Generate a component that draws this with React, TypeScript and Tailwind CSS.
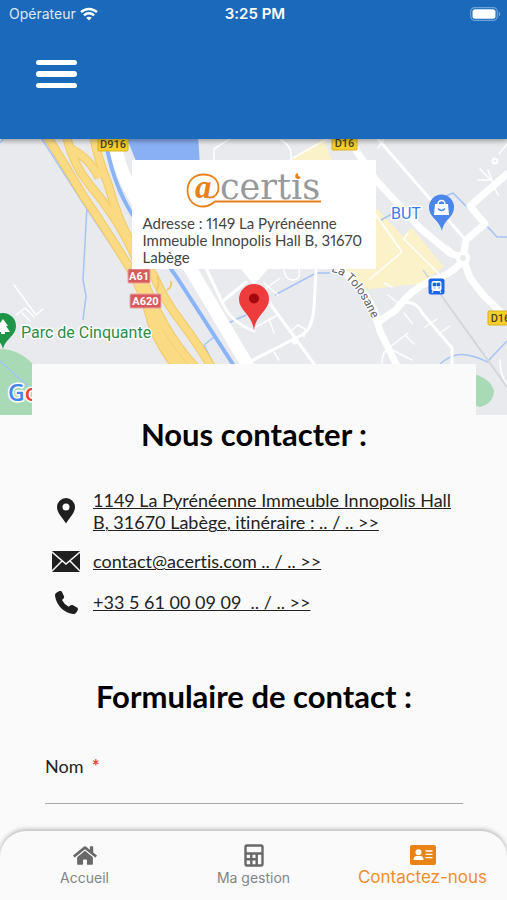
import type { ReactNode } from "react";
import { FaHome } from "react-icons/fa";

function WifiIcon() {
  return (
    <svg className="h-[14px] w-[18px] shrink-0" viewBox="0 0 18 14" fill="none" stroke="white" aria-hidden="true">
      <path d="M1 5.200C5.500.9 12.500.9 17 5.200" strokeWidth="2.400" />
      <path d="M3.900 8.300c2.900-2.700 7.300-2.700 10.200 0" strokeWidth="2.400" />
      <path d="M9 13.500 6.200 10.700c1.600-1.400 4-1.400 5.600 0Z" fill="white" stroke="none" />
    </svg>
  );
}

function BatteryIcon() {
  return (
    <svg className="h-[14px] w-[31px]" viewBox="0 0 31 14" aria-hidden="true">
      <rect x=".7" y=".7" width="26.600" height="12.600" rx="4" fill="none" stroke="#6fa2d8" strokeWidth="1.200" />
      <rect x="2.500" y="2.300" width="23" height="9.400" rx="2.500" fill="white" />
      <path d="M28.800 4.500c2 .8 2 4.200 0 5Z" fill="#6fa2d8" />
    </svg>
  );
}

function RoadBadge({ x, y, w, text, red = false }: { x: number; y: number; w: number; text: string; red?: boolean }) {
  return (
    <g>
      <rect x={x} y={y} width={w} height="14" rx="1" fill={red ? "#d75a5c" : "#f6cf2d"} stroke={red ? "#e9a3a4" : "#d9b21f"} strokeWidth="1" />
      <text x={x + w / 2} y={y + 11} textAnchor="middle" fontSize="11" fontWeight={red ? 700 : 500} fill={red ? "#fff" : "#4b431c"}>
        {text}
      </text>
    </g>
  );
}

const highways = [
  "M46 134 84 197Q104 226 131 270Q146 298 152 324Q159 345 177 368",
  "M66 134Q72 163 89 184Q118 218 134 254Q148 296 164 324Q177 347 196 368",
  "M69 148Q90 158 99 178",
  "M93 134Q98 160 108 184Q118 222 136 252L154 276Q164 300 182 323Q200 347 212 368",
  "M140 276Q151 306 159 330Q168 347 186 368",
];

const mainRoads = [
  "M345 134 376 180 420 228 450 253 463 258",
  "M463 258 466 240 485 224 470 206 507 174",
  "M463 258 470 278 484 296 507 318",
  "M463 260Q452 275 430 281Q410 290 396 310L378 322Q372 295 340 270",
  "M376 318 380 331 397 366",
];

const streets = [
  "M378 139 463 237",
  "M403 303Q416 300 423 314L452 348V366",
  "M316 270 314 308Q312 331 300 336L253 360",
  "M266 298 314 364",
  "M206 268 222 302Q230 322 254 331",
  "M222 302 246 282",
];

const lanes = [
  "M264 290 280 278M254 328 276 316M269 319l5 14",
  "M291 331l7-6 7 4-1 8M274 352l5 8",
  "M284 270q1 10 9 10t6-12M264 283l14 12",
  "M382 363q0-12 8-16l18-14M394 351l18 9M406 336l8 8",
  "M388 295l10 8M384 283l8 4M404 313l8 10M425 327l12-8M438 334l12-8",
  "M214 160v-11l28-18M281 140q14 8 9 22",
  "M378 148l8-12M293 158l36-20",
  "M499 154l8-10M480 169l12 12 6 14M478 180h14l-4-10",
  "M370 279 402 252 376 215M408 233l-4 6 40 40",
  "M448 246l12 12M500 360q0 16 7 24",
  "M14 285l22 30 7-6M22 313l8 8M16 315l9-7 9 9",
];

function TownMap() {
  return (
    <svg
      className="block h-[276px] w-full font-['Roboto',sans-serif]"
      viewBox="0 139 507 276"
      preserveAspectRatio="xMidYMid slice"
      role="img"
      aria-label="Plan de Labège"
    >
      <rect x="-200" y="100" width="907" height="400" fill="#e8eaed" />

      <path d="M125 134h73l2 32h-62Z" fill="#8ab0f4" />
      <path d="M324 139l8 21h-41l2-3ZM377 209l26 27 9-8 32 39-24 17-60 6-16-20Z" fill="#fcf2c9" />
      <path d="M-2 349Q18 348 34 365v52H-2Z" fill="#a8dab5" />
      <path d="M474 374Q491 379 494 391 493 404 480 407l-6-2Z" fill="#a8dab5" />

      <g fill="none" stroke="#a4c4f5" strokeWidth="1.500">
        <path d="M40 136 85 206 129 272M87 206 83 280 86 296 83 320" />
        <path d="M275 295 316 273H330M381 220l22-12M430 203l23-10 16 16M486 225l11 12h10" />
        <path d="M440 364Q453 352 467 355T487 362L507 341M0 361 30 388" />
        <path d="M226 324 246 315M204 345l10-8M204 345l10 20" />
      </g>
      <path d="M107 148Q115 190 136 220L176 276 234 366" fill="none" stroke="#8ab4f8" strokeWidth="4" />
      <path d="M423 270 507 387" fill="none" stroke="#d3d6da" strokeWidth="2" />

      <g fill="none" stroke="#fff" strokeLinejoin="round" strokeLinecap="round">
        {lanes.map((d) => (
          <path key={d} d={d} strokeWidth="1.500" />
        ))}
        {streets.map((d) => (
          <path key={d} d={d} strokeWidth="3" />
        ))}
        {mainRoads.map((d) => (
          <path key={d} d={d} strokeWidth="7" />
        ))}
        <path d="M113 134Q119 175 140 205L190 268 248 366" strokeWidth="13" />
        <path d="M-3 146 6 136" stroke="#a4c4f5" strokeWidth="1.500" />
        <circle cx="463" cy="258" r="5" fill="#e8eaed" strokeWidth="4" />
        <circle cx="495" cy="161" r="2.500" strokeWidth="2" />
        <circle cx="295" cy="341" r="2" strokeWidth="3" />
      </g>

      <g fill="none" strokeLinejoin="round">
        {highways.map((d) => (
          <path key={d} d={d} stroke="#f3c968" strokeWidth="9" />
        ))}
        {highways.map((d) => (
          <path key={d} d={d} stroke="#fadb83" strokeWidth="7" />
        ))}
        <path d="M157 290q3-7 0-14M167 290q5-2 4-9" stroke="#f3c968" strokeWidth="2" />
      </g>

      <RoadBadge x={98} y={137} w={30} text="D916" />
      <RoadBadge x={332} y={136} w={25} text="D16" />
      <RoadBadge x={488} y={311} w={25} text="D16" />
      <RoadBadge x={128} y={269} w={22} text="A61" red />
      <RoadBadge x={130} y={294} w={31} text="A620" red />

      <g fontSize="16" strokeLinejoin="round" strokeWidth="3" paintOrder="stroke" stroke="#fff">
        <text x="21" y="338" fill="#2b8c48">Parc de Cinquante</text>
        <text x="391" y="219" fill="#3b7de0">BUT</text>
        <text x="8" y="401" fontSize="23" fontFamily="Open Sans" fontWeight="600">
          <tspan fill="#4285f4">G</tspan>
          <tspan fill="#ea4335">o</tspan>
        </text>
      </g>
      <path id="tolosane" d="M331 272Q354 274 376 328" fill="none" />
      <text fontSize="12" fill="#5f6368" stroke="#fff" strokeWidth="2" paintOrder="stroke">
        <textPath href="#tolosane">La Tolosane</textPath>
      </text>

      <path d="M3 349C1 339-10 336-10 326a13 13 0 0 1 26 0C16 336 5 339 3 349Z" fill="#1e9447" />
      <path d="M3 319l5 7H6l4 6H5v2H1v-2h-5l4-6h-2Z" fill="#fff" />

      <path d="M442 231C439 219 429 218 429 207a12.500 12.500 0 0 1 25 0C454 218 444 219 442 231Z" fill="#4a86ec" />
      <path d="M435 204h13l1 11h-15Z" fill="#fff" />
      <path d="M438 205v-1a3.500 3.500 0 0 1 7 0v1" fill="none" stroke="#fff" strokeWidth="1.500" />
      <path d="M438 208.500q3.500 4 7 0" fill="none" stroke="#4a86ec" strokeWidth="1.500" />

      <rect x="428.500" y="278.500" width="16" height="16" rx="2.500" fill="#1a67e8" />
      <rect x="431.500" y="281" width="10" height="10" rx="2" fill="#fff" />
      <path d="M433 283h3v3h-3Zm4 0h3v3h-3Zm-3.500 5h2m2.500 0h2" fill="#1a67e8" stroke="#1a67e8" strokeWidth=".6" />
      <path d="M433 291l-1 2m8-2 1 2" stroke="#fff" />

      <path d="M241 269h27l-14 16Z" fill="#fff" />
      <path d="M254 331C253 315 239 311 239 299a15 15 0 0 1 30 0C269 311 255 315 254 331Z" fill="#ee3b3b" />
      <circle cx="254" cy="298.500" r="5" fill="#a5080d" />
    </svg>
  );
}

function Logo() {
  return (
    <svg className="mx-auto block h-9 w-[138px]" viewBox="0 0 138 36" role="img" aria-label="@certis">
      <text x="10" y="26" fontFamily="Liberation Serif" fontSize="33" fontStyle="italic" fontWeight="700" fill="#e8811c">a</text>
      <path
        d="M24 25.500C30 26 33.500 21 33.500 16 33.500 7 27 2.500 18.500 2.500 9 2.500 2.500 9 2.500 18.500S9 34.500 18 34.500c5 0 8-1.500 12-5H136"
        fill="none"
        stroke="#e8811c"
        strokeWidth="1.800"
      />
      <text x="35" y="27" fontFamily="DejaVu Serif" fontSize="35" fill="#97999b">certis</text>
      <rect x="108" y="-2" width="11" height="8" fill="#fff" />
      <path d="M113 1a3 3 0 1 0 3 4 3 3 0 0 1-3-4Z" fill="#e8811c" />
    </svg>
  );
}

function ContactRow({ icon, href, children }: { icon: ReactNode; href: string; children: ReactNode }) {
  return (
    <li className="flex min-h-[26px] items-center gap-[13px]">
      <span className="flex w-7 shrink-0 justify-center text-[#1f1f1f]">{icon}</span>
      <a href={href} className="text-lg leading-[22px] text-[#222] underline decoration-1">
        {children}
      </a>
    </li>
  );
}

export default function App() {
  return (
    <div className="flex min-h-screen flex-col bg-[#fafafa] font-['Lato',sans-serif] [font-variant-ligatures:none]">
      <header className="relative h-[139px] bg-[#1b69ba] text-white shadow-[0_2px_5px_rgba(0,0,0,0.35)]">
        <div className="grid h-7 grid-cols-3 items-center pl-[9px] pr-[6px] font-['Inter',sans-serif] text-[15px]">
          <span className="flex items-center gap-1 text-sm text-[#dce9f6]">
            Opérateur
            <WifiIcon />
          </span>
          <time className="text-center font-semibold">3:25 PM</time>
          <span className="flex justify-end">
            <BatteryIcon />
          </span>
        </div>
        <button type="button" aria-label="Menu" className="ml-9 mt-8 flex w-[41px] flex-col gap-[6px]">
          <span className="h-[5px] w-full rounded-full bg-white" />
          <span className="h-[6px] w-full rounded-full bg-white" />
          <span className="h-[5px] w-full rounded-full bg-white" />
        </button>
      </header>

      <main className="flex-1">
        <div className="grid">
          <div className="col-start-1 row-start-1">
            <TownMap />
          </div>
          <div className="col-start-1 row-start-1 mt-[21px] h-[109px] w-[244px] justify-self-center bg-white px-[11px] pt-3">
            <Logo />
            <p className="mt-[7px] text-[15px] leading-[17px] text-[#444] proportional-nums">
              Adresse : 1149 La Pyrénéenne Immeuble Innopolis Hall B, 31670 Labège
            </p>
          </div>
        </div>

        <section className="relative -mt-[51px] ml-8 mr-[31px] bg-[#fafafa] px-[13px] pt-[51px]">
          <h1 className="text-center text-[31px] font-bold leading-[38px] text-black">Nous contacter :</h1>
          <ul className="mt-9 flex flex-col gap-[15px] pl-[7px]">
            <ContactRow
              href="#itineraire"
              icon={
                <svg className="h-[26px] w-[18px]" viewBox="0 0 18 26" fill="currentColor" aria-hidden="true">
                  <path fillRule="evenodd" d="M9 0a9 9 0 0 0-9 9c0 6 5 10 9 16.500C13 19 18 15 18 9A9 9 0 0 0 9 0Zm0 5.500a3.500 3.500 0 1 1 0 7 3.500 3.500 0 0 1 0-7Z" />
                </svg>
              }
            >
              1149 La Pyrénéenne Immeuble Innopolis Hall B, 31670 Labège, itinéraire : .. / .. &gt;&gt;
            </ContactRow>
            <ContactRow
              href="mailto:contact@acertis.com"
              icon={
                <svg className="h-[21px] w-7" viewBox="0 0 28 21" aria-hidden="true">
                  <rect width="28" height="21" rx="1" fill="currentColor" />
                  <path d="M0 1l14 12L28 1M0 20l10-10M28 20 18 10" fill="none" stroke="#fafafa" strokeWidth="1.500" />
                </svg>
              }
            >
              contact@acertis.com .. / .. &gt;&gt;
            </ContactRow>
            <ContactRow
              href="tel:+33561000909"
              icon={
                <svg className="h-[23px] w-[23px]" viewBox="0 0 23 23" fill="currentColor" aria-hidden="true">
                  <path d="M1 2 4 .2Q6-.6 7 1L9 5.200Q9.500 6.600 8.500 7.600L7 9Q9 13.300 13.700 15.800L15.200 14.400Q16.200 13.600 17.500 14.100L22 16.500Q23.400 17.500 22.800 19L21.300 21.500Q20.500 23 18 23C9 22 1 14 0 4.500Q0 2.900 1 2Z" />
                </svg>
              }
            >
              +33 5 61 00 09 09&nbsp; .. / .. &gt;&gt;
            </ContactRow>
          </ul>

          <h2 className="mt-[62px] text-center text-[31px] font-bold leading-[38px] text-black">Formulaire de contact :</h2>
          <form className="mt-10">
            <label htmlFor="nom" className="block text-lg leading-[22px] text-[#222]">
              Nom <span className="ml-1 font-bold text-[#f04438]">*</span>
            </label>
            <input
              id="nom"
              name="nom"
              type="text"
              required
              className="block h-[27px] w-full border-b border-[#a9adab] bg-transparent text-lg outline-none"
            />
          </form>
        </section>
      </main>

      <nav className="grid h-[69px] grid-cols-3 rounded-t-[26px] bg-[#fafafa] font-['Inter',sans-serif] text-sm text-[#858585] shadow-[0_-2px_4px_rgba(0,0,0,0.25)]">
        <a href="#accueil" className="flex flex-col items-center pt-[14px]">
          <FaHome className="h-[21px] w-6 text-[#686868]" aria-hidden="true" />
          <span className="mt-[2px] leading-5">Accueil</span>
        </a>
        <a href="#gestion" className="flex flex-col items-center pt-[13px]">
          <svg className="h-[23px] w-5" viewBox="0 0 20 23" fill="none" stroke="#686868" strokeWidth="2.400" aria-hidden="true">
            <rect x="1.500" y="1.500" width="17" height="20" rx="1.500" />
            <path d="M2 9.500h16M7.300 9.500V21M12.700 9.500V21M2 15.300h11" />
          </svg>
          <span className="mt-[1px] leading-5">Ma gestion</span>
        </a>
        <a href="#contact" aria-current="page" className="flex flex-col items-center pt-[14px] text-[#ee8d2f]">
          <svg className="h-5 w-[26px]" viewBox="0 0 26 20" aria-hidden="true">
            <rect width="26" height="20" rx="2" fill="#e98318" />
            <circle cx="8.500" cy="7.300" r="3" fill="white" />
            <path d="M3.500 15c0-4 2-4 5-4s5 0 5 4Z" fill="white" />
            <path d="M15.500 6h7M15.500 9.300h7M15.500 12.600h7" stroke="white" strokeWidth="1.300" />
          </svg>
          <span className="text-[17px] leading-6">Contactez-nous</span>
        </a>
      </nav>
    </div>
  );
}
